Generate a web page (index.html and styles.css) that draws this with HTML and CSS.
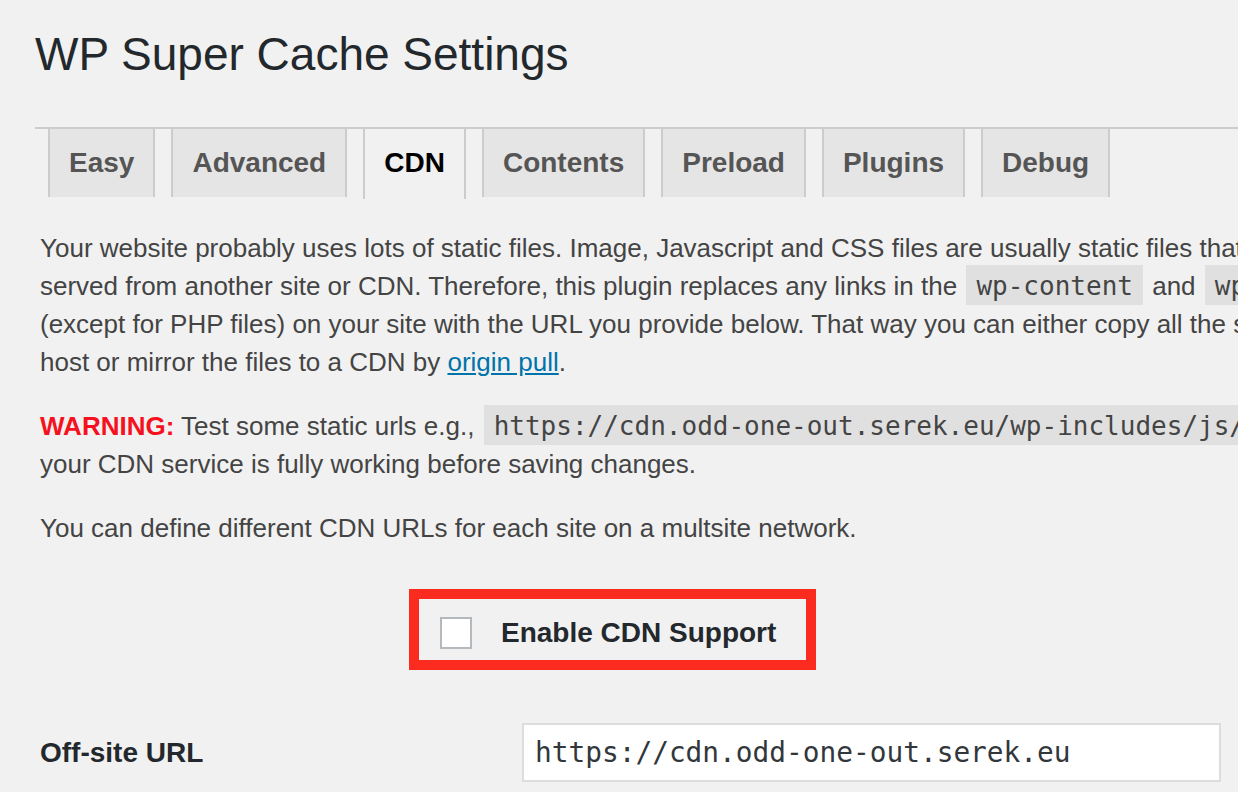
FILE: index.html
```html
<!DOCTYPE html>
<html>
<head>
<meta charset="utf-8">
<title>WP Super Cache Settings</title>
<link rel="stylesheet" href="styles.css">
</head>
<body>
<div class="wrap">
  <h1 class="title">WP Super Cache Settings</h1>
  <nav class="tabs">
    <a class="tab">Easy</a>
    <a class="tab">Advanced</a>
    <a class="tab tab-active">CDN</a>
    <a class="tab">Contents</a>
    <a class="tab">Preload</a>
    <a class="tab">Plugins</a>
    <a class="tab">Debug</a>
  </nav>
  <div class="content">
    <p class="para">Your website probably uses lots of static files. Image, Javascript and CSS files are usually static files that could just as easily be<br>served from another site or CDN. Therefore, this plugin replaces any links in the <code class="code">wp-content</code> and <code class="code">wp-includes</code> directories<br>(except for PHP files) on your site with the URL you provide below. That way you can either copy all the static content to a dedicated<br>host or mirror the files to a CDN by <a class="link">origin pull</a>.</p>
    <p class="para"><strong class="warn">WARNING:</strong> Test some static urls e.g., <code class="code">https://cdn.odd-one-out.serek.eu/wp-includes/js/jquery/jquery.js</code> to ensure<br>your CDN service is fully working before saving changes.</p>
    <p class="para">You can define different CDN URLs for each site on a multsite network.</p>
    <div class="enable">
      <label class="enable-label"><span class="checkbox"></span><strong class="enable-text">Enable CDN Support</strong></label>
    </div>
    <div class="row">
      <div class="row-label">Off-site URL</div>
      <div class="text-input">https://cdn.odd-one-out.serek.eu</div>
    </div>
  </div>
</div>
</body>
</html>
```
FILE: styles.css
```css
html, body {
  margin: 0;
  padding: 0;
  background: #f1f1f1;
  overflow: hidden;
}
body {
  width: 1238px;
  height: 792px;
  font-family: "Liberation Sans", Arial, sans-serif;
  color: #444;
}
.wrap {
  padding-left: 35px;
}
.title {
  margin: 0;
  padding-top: 24px;
  font-size: 46px;
  line-height: 60px;
  font-weight: 400;
  color: #23282d;
}
.tabs {
  margin-top: 43px;
  border-top: 2px solid #ccc;
  display: flex;
  gap: 16px;
  padding-left: 13px;
  height: 68px;
}
.tab {
  display: block;
  box-sizing: border-box;
  height: 68px;
  padding: 10px 19px;
  font-size: 28px;
  line-height: 48px;
  font-weight: 700;
  color: #555;
  background: #e5e5e5;
  border-left: 2px solid #ccc;
  border-right: 2px solid #ccc;
}
.tab-active {
  background: #f1f1f1;
  color: #000;
  height: 70px;
}
.content {
  padding-left: 5px;
  padding-top: 32px;
}
.para {
  margin: 0 0 26px;
  font-size: 26px;
  line-height: 38px;
  white-space: nowrap;
}
.code {
  font-family: "DejaVu Sans Mono", monospace;
  font-size: 26px;
  background: rgba(0, 0, 0, 0.07);
  padding: 6px 10px 4px;
  margin: 0 2px;
  color: #444;
}
.link {
  color: #0073aa;
  text-decoration: underline;
}
.warn {
  color: #f5121e;
  font-weight: 700;
}
.enable {
  display: inline-flex;
  margin: 16px 0 0 369px;
  border: 10px solid #fc2b1f;
  padding: 18px 30px 11px 21px;
}
.enable-label {
  display: flex;
  align-items: center;
  gap: 29px;
}
.checkbox {
  display: block;
  box-sizing: border-box;
  width: 32px;
  height: 32px;
  background: #fff;
  border: 2px solid #b4b9be;
}
.enable-text {
  font-size: 28px;
  line-height: 32px;
  font-weight: 700;
  color: #23282d;
}
.row {
  margin-top: 53px;
  display: flex;
  align-items: center;
}
.row-label {
  width: 482px;
  font-size: 28px;
  font-weight: 700;
  color: #23282d;
}
.text-input {
  box-sizing: border-box;
  width: 699px;
  height: 59px;
  border: 2px solid #ddd;
  background: #fff;
  padding-left: 11px;
  font-family: "DejaVu Sans Mono", monospace;
  font-size: 27.8px;
  line-height: 55px;
  color: #32373c;
}
```
